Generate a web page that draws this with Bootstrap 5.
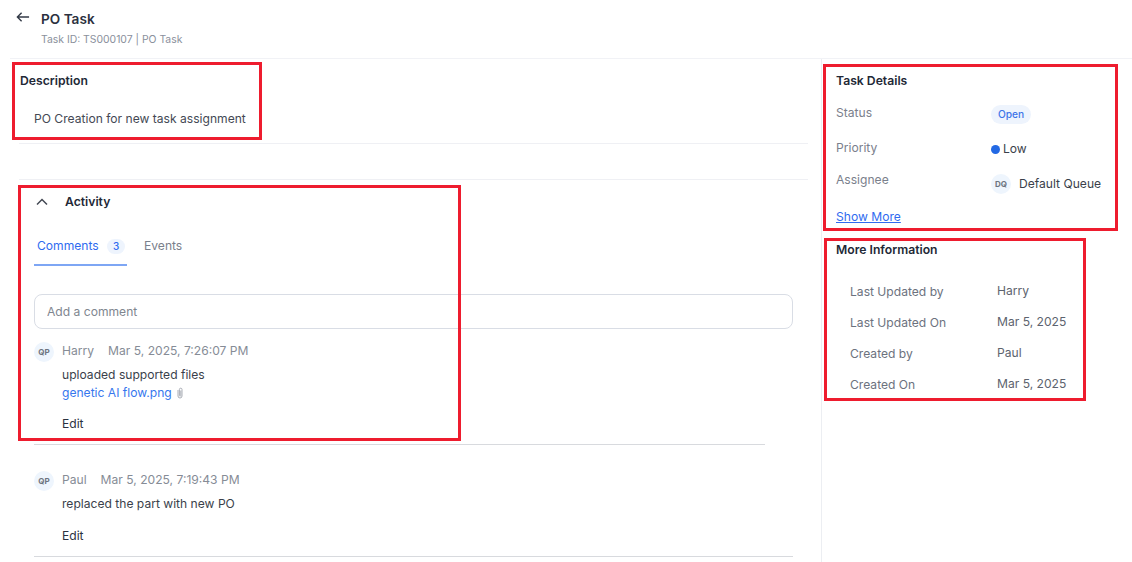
<!DOCTYPE html>
<html lang="en">
<head>
    <meta charset="utf-8">
    <title>PO Task</title>
    <link href="https://cdn.jsdelivr.net/npm/bootstrap@5.3.3/dist/css/bootstrap.min.css" rel="stylesheet">
    <style>
        html, body { height: 562px; overflow: hidden; }
        body { font-family: Inter, "Liberation Sans", sans-serif; font-size: 12.1px; color: #3a3f4b; background: #fff; position: relative; }

        /* header */
        .task-head { height: 59px; margin-left: 10px; padding: 11px 0 0 6px; border-bottom: 1px solid #f1f2f6; }
        .back-arrow { width: 14px; height: 12px; color: #333a47; }
        .task-title { font-size: 13.6px; font-weight: 600; line-height: 17px; color: #2b3140; margin-left: 11px; }
        .task-sub { font-size: 10.4px; line-height: 14px; color: #8a909c; margin: 5px 0 0 25px; }

        /* columns */
        .left-col { width: 822px; height: 503px; border-right: 1px solid #eceef2; padding-left: 19px; }
        .right-col { padding: 14px 0 0 14px; width: 310px; }
        .sect-title { font-size: 12.2px; font-weight: 600; line-height: 16px; color: #222836; }

        .desc-block { width: 789px; height: 85px; padding-top: 14px; border-bottom: 1px solid #eff0f4; }
        .desc-block .sect-title { margin-left: 1px; }
        .desc-text { margin: 21px 0 0 15px; line-height: 18px; color: #444954; }
        .gap-block { width: 789px; height: 36px; border-bottom: 1px solid #eff0f4; }

        .activity-head { padding: 14px 0 0 17px; height: 47px; }
        .chevron { width: 12px; height: 8px; margin-right: 17px; color: #444954; }

        .tab-row { margin-left: 15px; height: 39px; }
        .tab-on { width: 93px; padding: 10px 0 0 3px; color: #2f6bf0; border-bottom: 2px solid #7ea6f4; height: 39px; line-height: 18px; }
        .tab-off { color: #7a808c; margin-left: 17px; line-height: 18px; padding-top: 10px; }
        .count-pill { display: inline-block; width: 18px; height: 15px; line-height: 15px; border-radius: 8px; background: #eef4fd; font-size: 10px; text-align: center; margin-left: 5px; font-weight: 500; }

        .comment-box { margin: 28px 0 0 15px; width: 759px; height: 35px; border: 1px solid #d9dde5; border-radius: 8px; padding: 0 12px; font-size: 12.1px; color: #444954; font-family: inherit; }
        .comment-box::placeholder { color: #80868f; opacity: 1; }
        .comment-box:focus { box-shadow: none; border-color: #d9dde5; }

        .comment-item { margin-left: 15px; padding-top: 13px; border-bottom: 1px solid #d8dade; }
        .comment-one { width: 731px; height: 116px; }
        .comment-two { width: 759px; height: 112px; padding-top: 26px; }
        .avatar-dot { width: 20px; height: 20px; border-radius: 50%; background: #eef5fd; color: #6d7480; font-size: 8px; font-weight: 700; line-height: 20px; text-align: center; flex-shrink: 0; }
        .comment-meta { color: #868c96; margin-left: 8px; line-height: 16px; padding-top: 1px; }
        .comment-meta span + span { margin-left: 14px; }
        .comment-body { margin: 4px 0 0 28px; line-height: 18px; color: #3a3f4b; }
        .file-link { color: #3677ee; text-decoration: none; }
        .clip-icon { width: 8px; height: 14px; vertical-align: -3px; margin-left: 1px; color: #a9adb5; }
        .edit-link { margin: 13px 0 0 28px; line-height: 18px; color: #2b3140; }
        .comment-two .edit-link { margin-top: 14px; }

        /* right column rows */
        .info-row { display: flex; }
        .info-label { width: 155px; color: #7a808c; line-height: 16px; }
        .status-pill { display: inline-block; background: #eef4fd; color: #3d74e8; border-radius: 10px; font-size: 10.2px; font-weight: 500; line-height: 19px; padding: 0 7px; }
        .prio-dot { display: inline-block; width: 9px; height: 9px; border-radius: 50%; background: #2369e4; margin-right: 3px; vertical-align: -0.5px; }
        .assignee-row { margin-top: 14px; }
        .assignee-val { margin-top: 2px; }
        .show-more { display: block; margin-top: 15px; color: #2f6bf0; line-height: 16px; }
        .more-title { margin-top: 17px; }
        .more-rows { padding: 26px 0 0 14px; }
        .more-rows .info-row { margin-bottom: 15px; }
        .more-label { width: 147px; color: #6c727e; line-height: 16px; }
        .more-val { color: #5d636e; line-height: 16px; margin-top: -1px; }

        /* red annotation boxes drawn over the screenshot */
        .red-note { position: absolute; border: 3px solid #ee1c2e; pointer-events: none; }
        .note-desc { left: 12px; top: 62px; width: 250px; height: 78px; }
        .note-activity { left: 18px; top: 185px; width: 443px; height: 256px; }
        .note-details { left: 823px; top: 64px; width: 295px; height: 167px; }
        .note-more { left: 824px; top: 238px; width: 262px; height: 163px; }
    </style>
</head>
<body>

<!-- Header -->
<header class="task-head">
    <div class="d-flex align-items-start">
        <svg class="back-arrow" viewBox="0 0 15 12" fill="none" stroke="currentColor" stroke-width="1.5"><path d="M14 6H1.5M6 1.5 1.5 6 6 10.5"/></svg>
        <div class="task-title">PO Task</div>
    </div>
    <div class="task-sub">Task ID: TS000107 | PO Task</div>
</header>

<div class="d-flex">
    <!-- Left column -->
    <div class="left-col">
        <div class="desc-block">
            <div class="sect-title">Description</div>
            <div class="desc-text">PO Creation for new task assignment</div>
        </div>
        <div class="gap-block"></div>

        <div class="activity-head d-flex align-items-start">
            <svg class="chevron mt-1" viewBox="0 0 12 8" fill="none" stroke="currentColor" stroke-width="1.5"><path d="M1 6.5 6 1.5l5 5"/></svg>
            <div class="sect-title">Activity</div>
        </div>

        <div class="tab-row d-flex">
            <div class="tab-on">Comments <span class="count-pill">3</span></div>
            <div class="tab-off">Events</div>
        </div>

        <input class="form-control comment-box" type="text" placeholder="Add a comment">

        <div class="comment-item comment-one">
            <div class="d-flex">
                <div class="avatar-dot">QP</div>
                <div class="comment-meta"><span>Harry</span><span>Mar 5, 2025, 7:26:07 PM</span></div>
            </div>
            <div class="comment-body">uploaded supported files<br>
                <a class="file-link" href="#">genetic AI flow.png</a>
                <svg class="clip-icon" viewBox="0 0 8 13" fill="none" stroke="currentColor" stroke-width="1"><path d="M2 3.5v6a2 2 0 0 0 4 0V3a1.3 1.3 0 0 0-2.6 0v6a.7.7 0 0 0 1.4 0V4"/></svg>
            </div>
            <div class="edit-link">Edit</div>
        </div>

        <div class="comment-item comment-two">
            <div class="d-flex">
                <div class="avatar-dot">QP</div>
                <div class="comment-meta"><span>Paul</span><span>Mar 5, 2025, 7:19:43 PM</span></div>
            </div>
            <div class="comment-body">replaced the part with new PO</div>
            <div class="edit-link">Edit</div>
        </div>
    </div>

    <!-- Right column -->
    <div class="right-col">
        <div class="sect-title">Task Details</div>
        <div class="info-row mt-3"><div class="info-label">Status</div><div><span class="status-pill">Open</span></div></div>
        <div class="info-row mt-3"><div class="info-label">Priority</div><div><span class="prio-dot"></span>Low</div></div>
        <div class="info-row assignee-row">
            <div class="info-label">Assignee</div>
            <div class="d-flex align-items-center assignee-val"><div class="avatar-dot">DQ</div><span class="ms-2">Default Queue</span></div>
        </div>
        <a class="show-more" href="#">Show More</a>

        <div class="sect-title more-title">More Information</div>
        <div class="more-rows">
            <div class="info-row"><div class="more-label">Last Updated by</div><div class="more-val">Harry</div></div>
            <div class="info-row"><div class="more-label">Last Updated On</div><div class="more-val">Mar 5, 2025</div></div>
            <div class="info-row"><div class="more-label">Created by</div><div class="more-val">Paul</div></div>
            <div class="info-row"><div class="more-label">Created On</div><div class="more-val">Mar 5, 2025</div></div>
        </div>
    </div>
</div>

<div class="red-note note-desc"></div>
<div class="red-note note-activity"></div>
<div class="red-note note-details"></div>
<div class="red-note note-more"></div>

<script src="https://cdn.jsdelivr.net/npm/bootstrap@5.3.3/dist/js/bootstrap.bundle.min.js"></script>
</body>
</html>
